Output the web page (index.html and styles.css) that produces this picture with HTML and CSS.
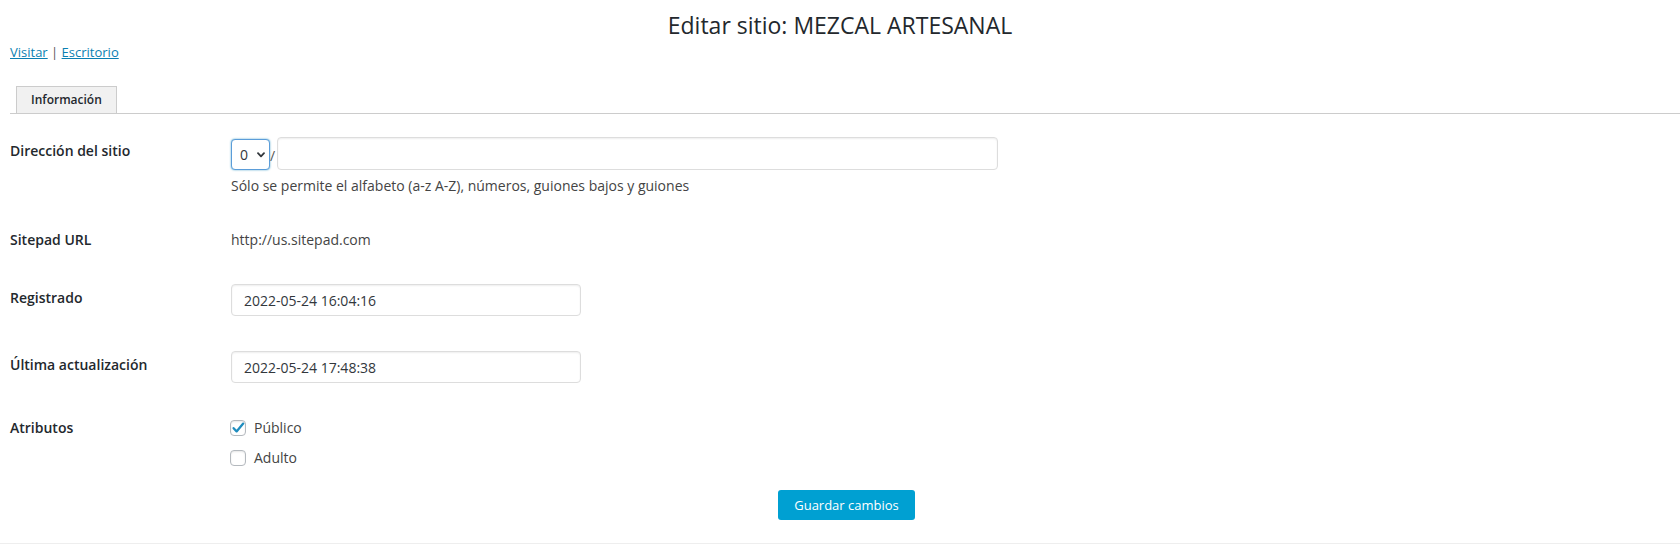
FILE: index.html
```html
<!DOCTYPE html>
<html lang="es">
<head>
    <meta charset="UTF-8">
    <meta name="viewport" content="width=device-width, initial-scale=1.0">
    <title>Editar sitio: MEZCAL ARTESANAL</title>
    <link rel="stylesheet" href="styles.css">
</head>
<body>
    <h1 class="page-title">Editar sitio: MEZCAL ARTESANAL</h1>

    <div class="wrap">
        <p class="site-links">
            <a href="#">Visitar</a> | <a href="#">Escritorio</a>
        </p>

        <nav class="nav-tabs">
            <a href="#" class="nav-tab active">Información</a>
        </nav>

        <form id="editSiteForm" class="site-form">
            <div class="form-rows">
                <div class="form-row">
                    <label class="row-label offset" for="siteDomain">Dirección del sitio</label>
                    <div class="row-field">
                        <div class="path-line">
                            <span class="select-wrap">
                                <select id="siteDomain" name="siteDomain" class="domain-select">
                                    <option>0</option>
                                </select>
                                <svg class="chevron" width="8" height="6" viewBox="0 0 8 6">
                                    <path d="M1 1.2 L4 4.3 L7 1.2" fill="none" stroke="#32373c" stroke-width="1.8" stroke-linecap="round" stroke-linejoin="round"/>
                                </svg>
                            </span>
                            <span class="slash">/</span>
                            <input type="text" id="sitePath" name="sitePath" class="text-input path-input">
                        </div>
                        <p class="help-text">Sólo se permite el alfabeto (a-z A-Z), números, guiones bajos y guiones</p>
                    </div>
                </div>

                <div class="form-row">
                    <span class="row-label">Sitepad URL</span>
                    <div class="row-field">http://us.sitepad.com</div>
                </div>

                <div class="form-row">
                    <label class="row-label offset" for="registered">Registrado</label>
                    <div class="row-field">
                        <input type="text" id="registered" name="registered" class="text-input date-input" value="2022-05-24 16:04:16">
                    </div>
                </div>

                <div class="form-row">
                    <label class="row-label offset" for="lastUpdated">Última actualización</label>
                    <div class="row-field">
                        <input type="text" id="lastUpdated" name="lastUpdated" class="text-input date-input" value="2022-05-24 17:48:38">
                    </div>
                </div>

                <div class="form-row">
                    <span class="row-label">Atributos</span>
                    <div class="row-field checks">
                        <label class="check-line">
                            <span class="check-box">
                                <svg width="16" height="16" viewBox="0 0 16 16">
                                    <path d="M3.6 8.2 L6.6 11.4 L13.2 3.6" fill="none" stroke="#1e8cbe" stroke-width="2.3" stroke-linecap="round" stroke-linejoin="round"/>
                                </svg>
                            </span>
                            Público
                        </label>
                        <label class="check-line">
                            <span class="check-box"></span>
                            Adulto
                        </label>
                    </div>
                </div>
            </div>

            <div class="submit-row">
                <button type="button" class="button-primary">Guardar cambios</button>
            </div>
        </form>
    </div>

    <div class="footer-line"></div>
</body>
</html>
```

FILE: styles.css
```css
html, body {
    margin: 0;
    padding: 0;
    background-color: #fff;
}

body {
    font-family: "Open Sans", "Noto Sans", sans-serif;
    font-size: 14px;
    line-height: 19px;
    color: #444;
}

.page-title {
    margin: 0;
    padding-top: 10px;
    font-size: 23px;
    line-height: 30px;
    font-weight: 400;
    color: #23282d;
    text-align: center;
}

.wrap {
    padding-left: 10px;
}

.site-links {
    margin: 3px 0 0;
    font-size: 13px;
    line-height: 19px;
    color: #555;
}

.site-links a {
    color: #0a7fb2;
    text-decoration: underline;
}

.nav-tabs {
    display: flex;
    margin-top: 24px;
    border-bottom: 1px solid #ccc;
}

.nav-tab {
    margin-left: 6px;
    padding: 5px 14px;
    font-size: 12px;
    line-height: 16px;
    font-weight: 600;
    color: #23282d;
    text-decoration: none;
    background-color: #f1f1f1;
    border: 1px solid #ccc;
    border-bottom: none;
}

.site-form {
    padding-top: 23px;
}

.form-rows {
    display: flex;
    flex-direction: column;
    gap: 35px;
}

.form-row {
    display: flex;
}

.row-label {
    width: 221px;
    flex-shrink: 0;
    font-weight: 600;
    color: #23282d;
}

.row-label.offset {
    padding-top: 4px;
}

.row-field {
    color: #444;
}

.path-line {
    display: flex;
    align-items: flex-end;
}

.select-wrap {
    position: relative;
    display: block;
}

.domain-select {
    appearance: none;
    -webkit-appearance: none;
    display: block;
    width: 39px;
    height: 31px;
    margin: 0;
    padding: 0 0 0 8px;
    font-family: inherit;
    font-size: 14px;
    color: #32373c;
    background-color: #fff;
    border: 1px solid #5b9dd9;
    border-radius: 4px;
    box-shadow: 0 0 2px rgba(30, 140, 190, 0.8);
    outline: none;
}

.chevron {
    position: absolute;
    left: 26px;
    top: 13px;
}

.slash {
    margin: 0 2px 5px 0;
    font-size: 14px;
    color: #555;
}

.text-input {
    box-sizing: border-box;
    margin: 0;
    padding: 0 12px;
    font-family: inherit;
    font-size: 14px;
    color: #32373c;
    background-color: #fff;
    border: 1px solid #ddd;
    border-radius: 4px;
    box-shadow: inset 0 1px 2px rgba(0, 0, 0, 0.07);
    outline: none;
}

.path-input {
    width: 721px;
    height: 33px;
}

.date-input {
    width: 350px;
    height: 32px;
}

.help-text {
    margin: 6px 0 0;
    color: #444;
}

.checks {
    display: flex;
    flex-direction: column;
    gap: 11px;
}

.check-line {
    display: flex;
    align-items: center;
    gap: 8px;
    color: #444;
}

.check-box {
    box-sizing: border-box;
    display: block;
    width: 16px;
    height: 16px;
    margin-left: -1px;
    border: 1px solid #b4b9be;
    border-radius: 4px;
    background-color: #fff;
    box-shadow: inset 0 1px 2px rgba(0, 0, 0, 0.1);
}

.check-box svg {
    display: block;
    margin: -1px 0 0 -1px;
}

.submit-row {
    padding: 23px 0 0 3px;
    text-align: center;
}

.button-primary {
    height: 30px;
    padding: 0 16.5px;
    font-family: inherit;
    font-size: 13px;
    color: #fff;
    background-color: #00a0d2;
    border: none;
    border-radius: 3px;
    cursor: pointer;
}

.button-primary:hover {
    background-color: #0091cd;
}

.footer-line {
    margin-top: 23px;
    height: 1px;
    background-color: #eee;
}
```
